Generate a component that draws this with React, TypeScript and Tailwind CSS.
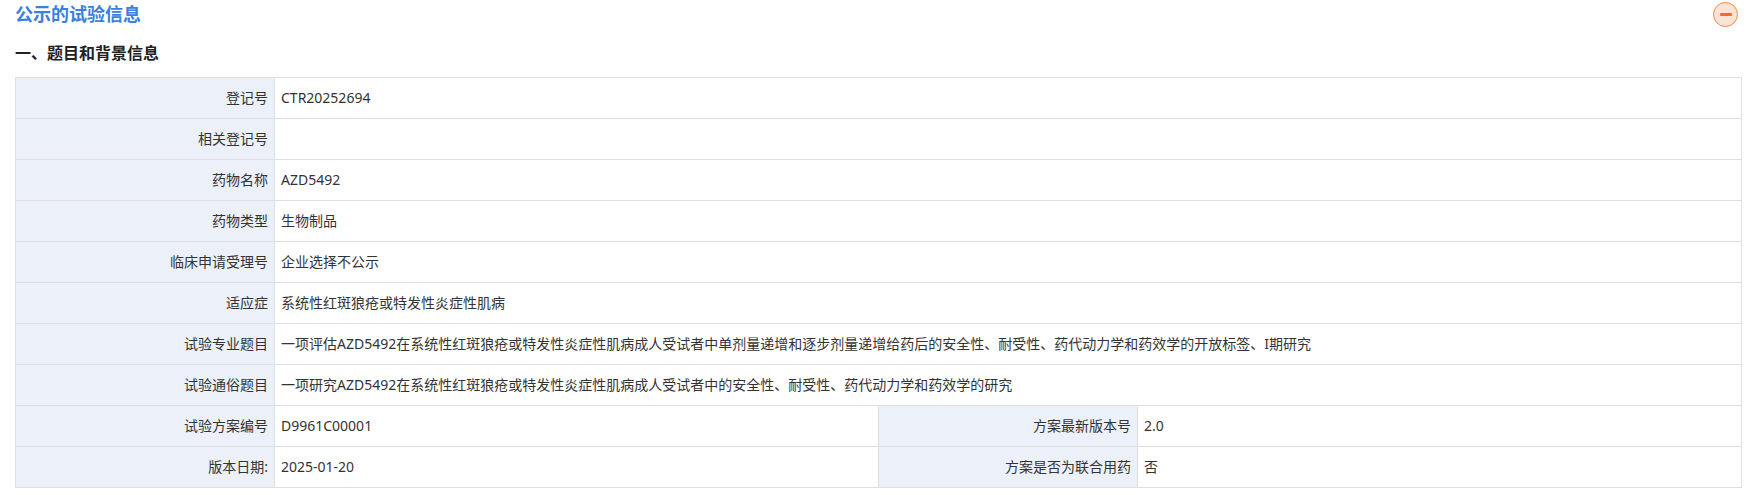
const font = { fontFamily: '"Noto Sans", "Noto Sans CJK SC", sans-serif' };

const wideRows = [
  ['登记号', 'CTR20252694'],
  ['相关登记号', ''],
  ['药物名称', 'AZD5492'],
  ['药物类型', '生物制品'],
  ['临床申请受理号', '企业选择不公示'],
  ['适应症', '系统性红斑狼疮或特发性炎症性肌病'],
  ['试验专业题目', '一项评估AZD5492在系统性红斑狼疮或特发性炎症性肌病成人受试者中单剂量递增和逐步剂量递增给药后的安全性、耐受性、药代动力学和药效学的开放标签、I期研究'],
  ['试验通俗题目', '一项研究AZD5492在系统性红斑狼疮或特发性炎症性肌病成人受试者中的安全性、耐受性、药代动力学和药效学的研究'],
];

const splitRows = [
  ['试验方案编号', 'D9961C00001', '方案最新版本号', '2.0'],
  ['版本日期:', '2025-01-20', '方案是否为联合用药', '否'],
];

function Label({ children }: { children: string }) {
  return (
    <td className="h-[41px] border border-[#dfdfdf] bg-[#ecf0f8] px-[6px] text-right font-normal whitespace-nowrap">
      {children}
    </td>
  );
}

function Value({ children, span }: { children: string; span?: number }) {
  return (
    <td colSpan={span} className="h-[41px] border border-[#dfdfdf] bg-white px-[6px] whitespace-nowrap">
      {children}
    </td>
  );
}

export default function App() {
  return (
    <div className="h-[495px] w-[1754px] overflow-hidden bg-white text-[#333]" style={font}>
      <div className="flex h-[29px] items-center justify-between pr-[16px] pl-[15px]">
        <h2 className="text-[18px] leading-[29px] font-bold text-[#3a80e0]">公示的试验信息</h2>
        <button className="flex h-[25px] w-[25px] items-center justify-center rounded-full border border-[#fb8a4b] bg-[#fde3d3]">
          <span className="h-[3px] w-[12px] rounded-[1px] bg-[#fb6a22]" />
        </button>
      </div>
      <h3 className="mt-[11px] pl-[15px] text-[16px] leading-[26px] font-bold text-[#222]">一、题目和背景信息</h3>
      <table className="mt-[11px] ml-[15px] w-[1727px] table-fixed border-collapse text-[14px] leading-[20px]">
        <colgroup>
          <col className="w-[259px]" />
          <col className="w-[604px]" />
          <col className="w-[259px]" />
          <col />
        </colgroup>
        <tbody>
          {wideRows.map(([label, value]) => (
            <tr key={label}>
              <Label>{label}</Label>
              <Value span={3}>{value}</Value>
            </tr>
          ))}
          {splitRows.map(([a, b, c, d]) => (
            <tr key={a}>
              <Label>{a}</Label>
              <Value>{b}</Value>
              <Label>{c}</Label>
              <Value>{d}</Value>
            </tr>
          ))}
        </tbody>
      </table>
    </div>
  );
}
